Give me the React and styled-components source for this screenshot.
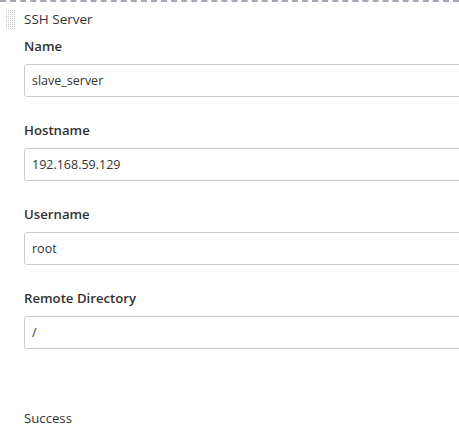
import styled, { createGlobalStyle } from "styled-components";

const GlobalStyle = createGlobalStyle`
  html, body {
    margin: 0;
    padding: 0;
    background: #fff;
    overflow: hidden;
  }
  body {
    font-family: "Open Sans", "Lato", sans-serif;
    color: #333;
  }
`;

const fields = [
  { label: "Name", value: "slave_server" },
  { label: "Hostname", value: "192.168.59.129" },
  { label: "Username", value: "root" },
  { label: "Remote Directory", value: "/" },
];

const Panel = styled.section`
  width: 459px;
  height: 431px;
  border-top: 2px dashed #a3aab3;
  box-sizing: border-box;
  overflow: hidden;
`;

const Header = styled.div`
  display: flex;
  align-items: center;
  gap: 8px;
  height: 34px;
  padding-left: 5px;
`;

const Handle = styled.div`
  width: 11px;
  height: 20px;
  background-color: #c2c2c2;
  background-image: linear-gradient(90deg, #fff 1px, transparent 1px),
    linear-gradient(#fff 1px, transparent 1px);
  background-size: 2px 2px;
`;

const Title = styled.span`
  font-size: 13.5px;
`;

const Body = styled.div`
  display: flex;
  flex-direction: column;
  gap: 23px;
  padding-left: 24px;
`;

const Field = styled.div`
  display: flex;
  flex-direction: column;
  gap: 8px;
`;

const Label = styled.label`
  font-size: 13.2px;
  font-weight: 600;
  color: #333;
  line-height: 20px;
`;

const Input = styled.div`
  width: 500px;
  height: 33px;
  box-sizing: border-box;
  border: 1px solid #ccc;
  border-radius: 3px;
  padding: 0 7px;
  display: flex;
  align-items: center;
  font-size: 12.5px;
  color: #333;
`;

const Status = styled.div`
  margin-top: 36px;
  font-size: 13.2px;
  line-height: 20px;
`;

export default function App() {
  return (
    <>
      <GlobalStyle />
      <Panel>
        <Header>
          <Handle />
          <Title>SSH Server</Title>
        </Header>
        <Body>
          {fields.map(({ label, value }) => (
            <Field key={label}>
              <Label>{label}</Label>
              <Input>{value}</Input>
            </Field>
          ))}
          <Status>Success</Status>
        </Body>
      </Panel>
    </>
  );
}
